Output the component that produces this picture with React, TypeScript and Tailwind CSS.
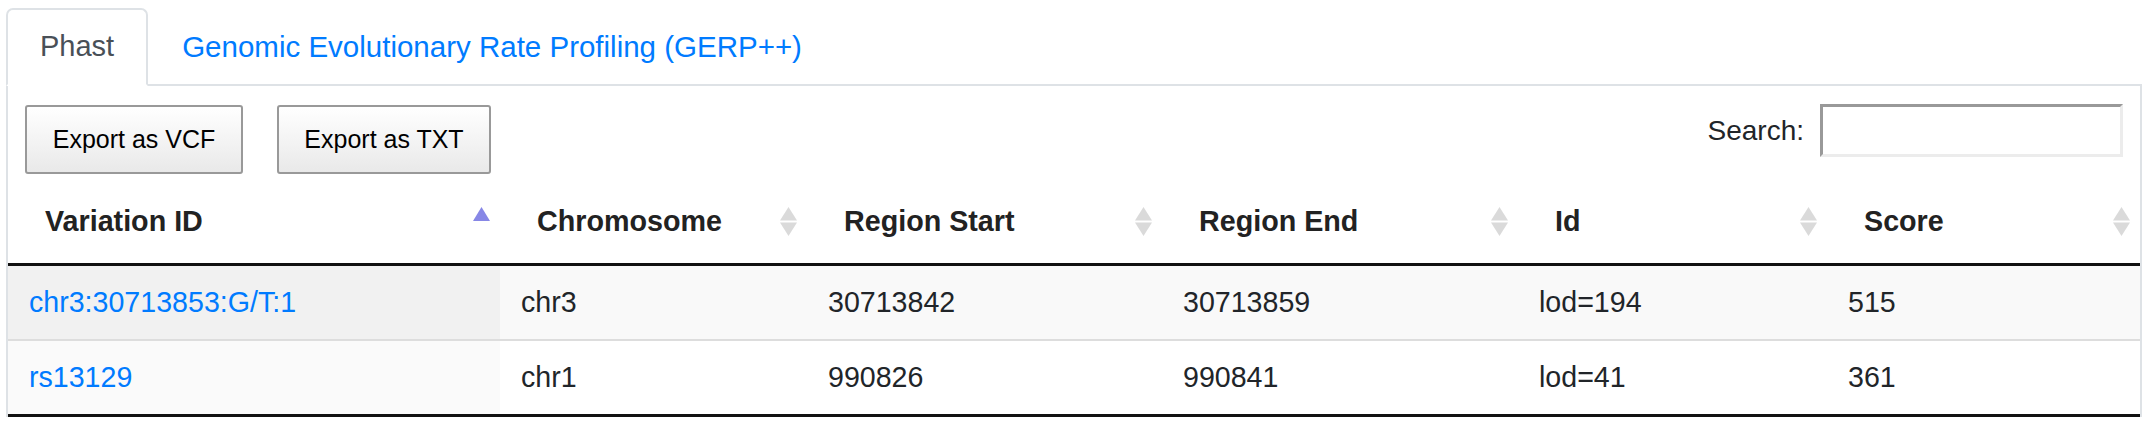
import React from "react"

type SortState = "asc" | "both"

const columns: { label: string; sort: SortState }[] = [
  { label: "Variation ID", sort: "asc" },
  { label: "Chromosome", sort: "both" },
  { label: "Region Start", sort: "both" },
  { label: "Region End", sort: "both" },
  { label: "Id", sort: "both" },
  { label: "Score", sort: "both" },
]

const rows = [
  { id: "chr3:30713853:G/T:1", chrom: "chr3", start: "30713842", end: "30713859", lod: "lod=194", score: "515" },
  { id: "rs13129", chrom: "chr1", start: "990826", end: "990841", lod: "lod=41", score: "361" },
]

function SortIcon({ sort }: { sort: SortState }) {
  return (
    <svg width="17" height="29" viewBox="0 0 17 29" className="shrink-0">
      {sort === "asc" ? (
        <polygon points="8.5,0 17,14 0,14" fill="#8787e6" />
      ) : (
        <>
          <polygon points="8.5,0 17,13.5 0,13.5" fill="#dadada" />
          <polygon points="0,15.5 17,15.5 8.5,29" fill="#dadada" />
        </>
      )}
    </svg>
  )
}

const grid = "grid grid-cols-[492px_307px_355px_356px_309px_313px]"

export default function App() {
  return (
    <div className="min-h-screen bg-white pt-[8px] text-[#212529]" style={{ fontFamily: '"Liberation Sans", Arial, sans-serif' }}>
      {/* Tabs */}
      <div className="ml-[6px] flex w-[2136px] border-b-2 border-[#dee2e6]">
        <div className="-mb-[2px] flex h-[78px] items-center rounded-t-[7px] border-2 border-[#dee2e6] border-b-white bg-white px-[32px] text-[29px] text-[#495057]">
          Phast
        </div>
        <div className="-mb-[2px] flex h-[78px] items-center border-2 border-transparent px-[32px] text-[29.5px] text-[#007bff]">
          Genomic Evolutionary Rate Profiling (GERP++)
        </div>
      </div>

      {/* Tab content */}
      <div className="ml-[6px] w-[2136px] border-x-2 border-[#dee2e6]">
        <div className="flex items-start justify-between px-[17px] pt-[19px]">
          <div className="flex gap-[34px]">
            <button className="h-[69px] w-[218px] rounded-[3px] border-2 border-[#999] bg-linear-to-b from-white to-[#e9e9e9] text-[25px] text-black">
              Export as VCF
            </button>
            <button className="h-[69px] w-[214px] rounded-[3px] border-2 border-[#999] bg-linear-to-b from-white to-[#e9e9e9] text-[25px] text-black">
              Export as TXT
            </button>
          </div>
          <div className="-mt-[1px] flex items-center gap-[16px]">
            <span className="text-[28px] text-[#212529]">Search:</span>
            <input
              type="text"
              className="h-[53px] w-[303px] border-[3px] border-t-[#999] border-l-[#999] border-r-[#ececec] border-b-[#ececec] bg-white outline-none"
            />
          </div>
        </div>

        {/* Table */}
        <div className="mt-[1px]">
          <div className={`${grid} h-[91px] border-b-[3px] border-[#111]`}>
            {columns.map((c) => (
              <div key={c.label} className="flex items-center justify-between pt-[5px] pl-[37px] pr-[10px] text-[28.7px] font-bold text-[#222]">
                <span>{c.label}</span>
                <SortIcon sort={c.sort} />
              </div>
            ))}
          </div>
          {rows.map((r, i) => {
            const odd = i % 2 === 0
            return (
              <div
                key={r.id}
                className={`${grid} text-[28.6px] ${odd ? "bg-[#f9f9f9]" : "bg-white"} ${i > 0 ? "border-t-2 border-[#dddddd]" : ""}`}
                style={{ height: i === 0 ? 73 : 75 }}
              >
                <div className={`flex items-center pl-[21px] text-[#007bff] ${odd ? "bg-[#f1f1f1]" : "bg-[#fafafa]"}`}>{r.id}</div>
                <div className="flex items-center pl-[21px]">{r.chrom}</div>
                <div className="flex items-center pl-[21px]">{r.start}</div>
                <div className="flex items-center pl-[21px]">{r.end}</div>
                <div className="flex items-center pl-[21px]">{r.lod}</div>
                <div className="flex items-center pl-[21px]">{r.score}</div>
              </div>
            )
          })}
          <div className="h-[3px] bg-[#111]" />
        </div>
      </div>
    </div>
  )
}
